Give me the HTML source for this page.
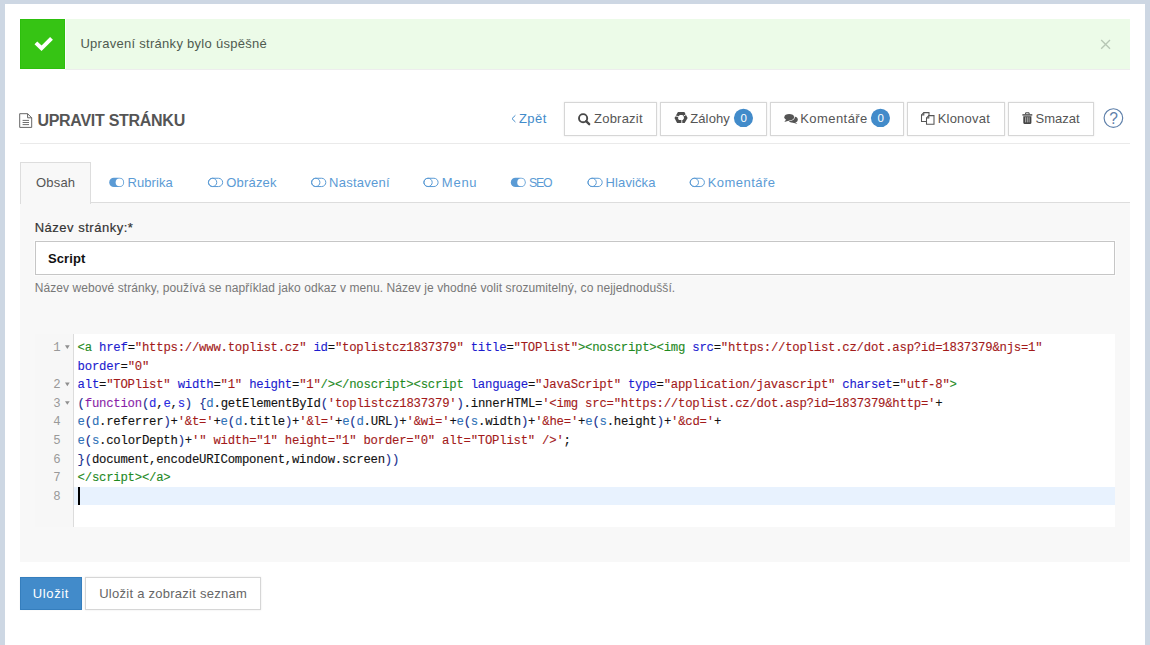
<!DOCTYPE html>
<html lang="cs">
<head>
<meta charset="utf-8">
<title>Upravit stránku</title>
<style>
html,body{margin:0;padding:0;}
body{width:1150px;height:645px;overflow:hidden;background:#cdd7e3;position:relative;font-family:"Liberation Sans",sans-serif;}
#page{position:absolute;left:5px;top:4px;width:1140px;height:641px;background:#fff;}
.abs{position:absolute;}
.t{position:absolute;white-space:nowrap;line-height:normal;}
#alertbox{left:65px;top:19px;width:1065px;height:50px;background:#ecfbe8;box-shadow:0 1px 0 #ededed, inset 1px 0 0 rgba(255,255,255,.75);}
#alertico{left:20px;top:19px;width:45px;height:50px;background:#36c414;box-sizing:border-box;border:1px solid #2dbf0d;}
#hr1{left:20px;top:143px;width:1110px;height:1px;background:#eaeaea;}
#tabline{left:20px;top:202px;width:1110px;height:1px;background:#ddd;}
#panel{left:20px;top:203px;width:1110px;height:359px;background:#f8f8f8;}
#tabact{left:20px;top:162px;width:69px;height:41px;background:#f8f8f8;border:1px solid #ddd;border-bottom:none;box-sizing:content-box;}
#input{left:35px;top:241px;width:1078px;height:32px;background:#fff;border:1px solid #c6c6c6;box-shadow:0 0 0 1px rgba(255,255,255,.55);}
#editor{left:35px;top:334px;width:1080px;height:193px;background:#fff;overflow:hidden;}
#gutter{left:0;top:0;width:38px;height:193px;background:#f7f7f7;border-right:1px solid #dcdcdc;}
#active{left:39px;top:153px;width:1041px;height:18px;background:#e8f2fe;}
#cursor{left:43px;top:153px;width:1.6px;height:18px;background:#000;}
#code{left:42.6px;top:0;}
.cl{-webkit-text-stroke:0.12px currentColor;position:absolute;left:0;white-space:pre;font-family:"Liberation Mono",monospace;font-size:12.3px;letter-spacing:-0.234px;line-height:18.64px;height:18.64px;color:#111;}
.gn{position:absolute;left:0;width:25.4px;text-align:right;font-family:"Liberation Mono",monospace;font-size:12.3px;letter-spacing:-0.234px;line-height:18.64px;color:#999;}
.fold{position:absolute;left:30px;width:0;height:0;border-left:2.4px solid transparent;border-right:2.4px solid transparent;border-top:3.8px solid #8f8f8f;}
.g{color:#1f8a1f}.a{color:#1c1ccf}.s{color:#a31a1a}.k{color:#8a1fa8}.p{color:#1a2f8f}.v{color:#2a2ae0}.i{color:#2f72b8}.n{color:#111}
#btn1{left:20px;top:577px;width:62px;height:33px;background:#428bca;box-sizing:border-box;border:1px solid #357ebd;box-shadow:0 0 2px rgba(0,0,0,.05);}
.btn{position:absolute;box-sizing:border-box;background:#fff;border:1px solid #d6d6d6;box-shadow:0 0 2px rgba(0,0,0,.09);}
svg{position:absolute;left:0;top:0;overflow:visible;}
.badge{position:absolute;font-size:11.5px;color:#fff;text-align:center;width:20px;line-height:20px;}
</style>
</head>
<body>
<div id="page"></div>
<div id="alertbox" class="abs"></div>
<div id="alertico" class="abs"></div>
<div id="hr1" class="abs"></div>
<div id="panel" class="abs"></div>
<div id="tabline" class="abs"></div>
<div id="tabact" class="abs"></div>
<div id="input" class="abs"></div>
<div id="btn1" class="abs"></div>
<div class="btn" style="left:564px;top:102px;width:93px;height:34px"></div>
<div class="btn" style="left:660px;top:102px;width:107px;height:34px"></div>
<div class="btn" style="left:770px;top:102px;width:134px;height:34px"></div>
<div class="btn" style="left:907px;top:102px;width:98px;height:34px"></div>
<div class="btn" style="left:1008px;top:102px;width:86px;height:34px"></div>
<div class="btn" style="left:85px;top:577px;width:176px;height:33px"></div>
<div id="editor" class="abs">
  <div id="gutter" class="abs">
<div class="gn" style="top:4.90px">1</div>
<div class="gn" style="top:42.18px">2</div>
<div class="gn" style="top:60.82px">3</div>
<div class="gn" style="top:79.46px">4</div>
<div class="gn" style="top:98.10px">5</div>
<div class="gn" style="top:116.74px">6</div>
<div class="gn" style="top:135.38px">7</div>
<div class="gn" style="top:154.02px">8</div>
  </div>
  <div id="active" class="abs"></div>
  <div id="code" class="abs">
<div class="cl" style="top:4.90px"><span class="g">&lt;a</span><span class="n"> </span><span class="a">href</span><span class="n">=</span><span class="s">&quot;https://www.toplist.cz&quot;</span><span class="n"> </span><span class="a">id</span><span class="n">=</span><span class="s">&quot;toplistcz1837379&quot;</span><span class="n"> </span><span class="a">title</span><span class="n">=</span><span class="s">&quot;TOPlist&quot;</span><span class="g">&gt;</span><span class="g">&lt;noscript&gt;</span><span class="g">&lt;img</span><span class="n"> </span><span class="a">src</span><span class="n">=</span><span class="s">&quot;https://toplist.cz/dot.asp?id=1837379&amp;njs=1&quot;</span></div>
<div class="cl" style="top:23.54px"><span class="a">border</span><span class="n">=</span><span class="s">&quot;0&quot;</span></div>
<div class="cl" style="top:42.18px"><span class="a">alt</span><span class="n">=</span><span class="s">&quot;TOPlist&quot;</span><span class="n"> </span><span class="a">width</span><span class="n">=</span><span class="s">&quot;1&quot;</span><span class="n"> </span><span class="a">height</span><span class="n">=</span><span class="s">&quot;1&quot;</span><span class="g">/&gt;</span><span class="g">&lt;/noscript&gt;</span><span class="g">&lt;script</span><span class="n"> </span><span class="a">language</span><span class="n">=</span><span class="s">&quot;JavaScript&quot;</span><span class="n"> </span><span class="a">type</span><span class="n">=</span><span class="s">&quot;application/javascript&quot;</span><span class="n"> </span><span class="a">charset</span><span class="n">=</span><span class="s">&quot;utf-8&quot;</span><span class="g">&gt;</span></div>
<div class="cl" style="top:60.82px"><span class="p">(</span><span class="k">function</span><span class="p">(</span><span class="v">d</span><span class="n">,</span><span class="v">e</span><span class="n">,</span><span class="v">s</span><span class="p">)</span><span class="n"> </span><span class="p">{</span><span class="i">d</span><span class="n">.getElementById</span><span class="p">(</span><span class="s">&#x27;toplistcz1837379&#x27;</span><span class="p">)</span><span class="n">.innerHTML=</span><span class="s">&#x27;&lt;img src</span><span class="s">=</span><span class="s">&quot;https://toplist.cz/dot.asp?id=1837379&amp;http=&#x27;</span><span class="n">+</span></div>
<div class="cl" style="top:79.46px"><span class="i">e</span><span class="p">(</span><span class="i">d</span><span class="n">.referrer</span><span class="p">)</span><span class="n">+</span><span class="s">&#x27;&amp;t=&#x27;</span><span class="n">+</span><span class="i">e</span><span class="p">(</span><span class="i">d</span><span class="n">.title</span><span class="p">)</span><span class="n">+</span><span class="s">&#x27;&amp;l=&#x27;</span><span class="n">+</span><span class="i">e</span><span class="p">(</span><span class="i">d</span><span class="n">.URL</span><span class="p">)</span><span class="n">+</span><span class="s">&#x27;&amp;wi=&#x27;</span><span class="n">+</span><span class="i">e</span><span class="p">(</span><span class="i">s</span><span class="n">.width</span><span class="p">)</span><span class="n">+</span><span class="s">&#x27;&amp;he=&#x27;</span><span class="n">+</span><span class="i">e</span><span class="p">(</span><span class="i">s</span><span class="n">.height</span><span class="p">)</span><span class="n">+</span><span class="s">&#x27;&amp;cd=&#x27;</span><span class="n">+</span></div>
<div class="cl" style="top:98.10px"><span class="i">e</span><span class="p">(</span><span class="i">s</span><span class="n">.colorDepth</span><span class="p">)</span><span class="n">+</span><span class="s">&#x27;&quot; width=&quot;1&quot; height=&quot;1&quot; border=&quot;0&quot; alt=&quot;TOPlist&quot; /&gt;&#x27;</span><span class="n">;</span></div>
<div class="cl" style="top:116.74px"><span class="p">}(</span><span class="n">document,encodeURIComponent,window.screen</span><span class="p">))</span></div>
<div class="cl" style="top:135.38px"><span class="g">&lt;/script&gt;</span><span class="g">&lt;/a&gt;</span></div>
<div class="cl" style="top:154.02px"></div>
  </div>
  <div id="cursor" class="abs"></div>
</div>
<svg width="1150" height="645" viewBox="0 0 1150 645">
  <!-- check -->
  <path d="M35.9 42.9 L41.5 48.3 L51.5 38.3" fill="none" stroke="#fff" stroke-width="4"/>
  <!-- close x -->
  <path d="M1101.2 40 L1110 48.8 M1110 40 L1101.2 48.8" fill="none" stroke="#b7c7b5" stroke-width="1.35"/>
  <!-- file-text-o -->
  <g fill="none" stroke="#5e5e5e" stroke-width="0.95">
    <path d="M19.7 113.7 H27.6 L31.7 117.8 V127.4 H19.7 Z"/>
    <path d="M27.6 113.7 V117.8 H31.7"/>
    <path d="M22.6 120.4 H29 M22.6 122.5 H29 M22.6 124.6 H29" stroke-width="0.9"/>
  </g>
  <!-- chevron -->
  <path d="M515.4 115.3 L512 118.65 L515.4 122" fill="none" stroke="#428bca" stroke-width="1"/>
  <!-- search -->
  <g fill="none" stroke="#484848">
    <circle cx="583.1" cy="118.2" r="4.1" stroke-width="1.9"/>
    <path d="M586.1 121.2 L589.2 124.2" stroke-width="2.3" stroke-linecap="round"/>
  </g>
  <!-- recycle -->
  <g fill="none">
    <path d="M676.2 118 L678.8 113.6 H683.5 L685.9 118 L683.8 121.6 H678 Z" stroke="#4c4c4c" stroke-width="3" stroke-linejoin="miter"/>
    <path d="M681.8 119.4 V124 M683.2 116.4 L687.4 113.6 M679.6 116.9 L673.8 115.5" stroke="#fff" stroke-width="0.9"/>
  </g>
  <!-- comments -->
  <g fill="#555">
    <ellipse cx="793.2" cy="119.6" rx="4.6" ry="3.2" fill="#555"/>
    <path d="M794.5 121.5 L797.4 123.9 L792.5 122.6 Z"/>
    <ellipse cx="789.2" cy="117.2" rx="5.6" ry="3.9" fill="#fff"/>
    <ellipse cx="789.2" cy="117.2" rx="4.9" ry="3.3"/>
    <path d="M786.5 119 L784.3 122 L789.5 120.4 Z"/>
  </g>
  <!-- files-o -->
  <g fill="#fff" stroke="#555" stroke-width="1.05">
    <path d="M923.8 112.6 H929 V121.4 H921.5 V115 Z"/>
    <path d="M923.8 112.6 V115 H921.5" fill="none"/>
    <path d="M928.8 115.6 H934 V124.2 H926.5 V118 Z"/>
    <path d="M928.8 115.6 V118 H926.5" fill="none"/>
  </g>
  <!-- trash -->
  <g fill="#444">
    <path d="M1022.4 114.2 H1032.3 V115.6 H1022.4 Z"/>
    <path d="M1025.6 114.2 V112.8 H1029.1 V114.2" fill="none" stroke="#444" stroke-width="1"/>
    <path d="M1023.3 116.2 H1031.4 V122.8 Q1031.4 123.9 1030.3 123.9 H1024.4 Q1023.3 123.9 1023.3 122.8 Z"/>
    <path d="M1025.6 117.2 V122.4 M1027.35 117.2 V122.4 M1029.1 117.2 V122.4" stroke="#c8c8c8" stroke-width=".8" fill="none"/>
  </g>
  <!-- fold arrows -->
  <g fill="#8f8f8f">
    <path d="M65 345.3 H69.7 L67.35 348.9 Z"/>
    <path d="M65 382.6 H69.7 L67.35 386.2 Z"/>
    <path d="M65 401.2 H69.7 L67.35 404.8 Z"/>
  </g>
  <!-- help -->
  <circle cx="1113.4" cy="118.1" r="9.3" fill="none" stroke="#5f80aa" stroke-width="1.15"/>
  <text x="1113.5" y="123.9" font-family="Liberation Sans, sans-serif" font-size="15.6" text-anchor="middle" fill="#5f80aa">?</text>
  <!-- badges -->
  <ellipse cx="743.45" cy="117.9" rx="9.55" ry="9.2" fill="#428bca"/>
  <ellipse cx="880.45" cy="117.9" rx="9.55" ry="9.2" fill="#428bca"/>
  <!-- toggles -->
  <g><rect x="109.20" y="177.75" width="14.9" height="9.3" rx="4.65" fill="#5b9bd5"/><circle cx="119.45" cy="182.4" r="3.8" fill="#fff"/></g>
  <g><rect x="510.80" y="177.75" width="14.9" height="9.3" rx="4.65" fill="#5b9bd5"/><circle cx="521.05" cy="182.4" r="3.8" fill="#fff"/></g>
  <g fill="none" stroke="#5b9bd5" stroke-width="1">
    <rect x="208.45" y="178.25" width="14.2" height="8.3" rx="4.15"/><circle cx="212.60" cy="182.4" r="4.15"/>
    <rect x="311.60" y="178.25" width="14.2" height="8.3" rx="4.15"/><circle cx="315.75" cy="182.4" r="4.15"/>
    <rect x="423.90" y="178.25" width="14.2" height="8.3" rx="4.15"/><circle cx="428.05" cy="182.4" r="4.15"/>
    <rect x="588.00" y="178.25" width="14.2" height="8.3" rx="4.15"/><circle cx="592.15" cy="182.4" r="4.15"/>
    <rect x="690.20" y="178.25" width="14.2" height="8.3" rx="4.15"/><circle cx="694.35" cy="182.4" r="4.15"/>
  </g>
</svg>
<span class="badge" style="left:733.6px;top:108px">0</span>
<span class="badge" style="left:870.6px;top:108px">0</span>
<span id="alert" class="t" style="left:80.45px;top:36.23px;font-size:13px;font-weight:400;color:#4f5a4f;letter-spacing:0.280px;">Upravení stránky bylo úspěšné</span>
<span id="title" class="t" style="left:37.44px;top:111.52px;font-size:16px;font-weight:700;color:#555;letter-spacing:-0.282px;">UPRAVIT STRÁNKU</span>
<span id="zpet" class="t" style="left:518.94px;top:111.23px;font-size:13px;font-weight:400;color:#428bca;letter-spacing:0.490px;">Zpět</span>
<span id="zobrazit" class="t" style="left:594.01px;top:111.23px;font-size:13px;font-weight:400;color:#555;letter-spacing:0.233px;">Zobrazit</span>
<span id="zalohy" class="t" style="left:690.18px;top:111.23px;font-size:13px;font-weight:400;color:#555;letter-spacing:0.136px;">Zálohy</span>
<span id="koment" class="t" style="left:800.17px;top:111.23px;font-size:13px;font-weight:400;color:#555;letter-spacing:0.450px;">Komentáře</span>
<span id="klon" class="t" style="left:937.68px;top:111.23px;font-size:13px;font-weight:400;color:#555;letter-spacing:0.216px;">Klonovat</span>
<span id="smazat" class="t" style="left:1035.45px;top:111.23px;font-size:13px;font-weight:400;color:#555;letter-spacing:0.027px;">Smazat</span>
<span id="t_obsah" class="t" style="left:36.02px;top:175.24px;font-size:13px;font-weight:400;color:#555;letter-spacing:0.185px;">Obsah</span>
<span id="t_rubrika" class="t" style="left:127.46px;top:175.24px;font-size:13px;font-weight:400;color:#5b9bd5;letter-spacing:0.086px;">Rubrika</span>
<span id="t_obrazek" class="t" style="left:226.22px;top:175.24px;font-size:13px;font-weight:400;color:#5b9bd5;letter-spacing:0.195px;">Obrázek</span>
<span id="t_nast" class="t" style="left:329.00px;top:175.24px;font-size:13px;font-weight:400;color:#5b9bd5;letter-spacing:0.269px;">Nastavení</span>
<span id="t_menu" class="t" style="left:441.82px;top:175.24px;font-size:13px;font-weight:400;color:#5b9bd5;letter-spacing:0.752px;">Menu</span>
<span id="t_seo" class="t" style="left:528.88px;top:175.87px;font-size:12.3px;font-weight:400;color:#5b9bd5;letter-spacing:-1.088px;">SEO</span>
<span id="t_hlav" class="t" style="left:605.62px;top:175.24px;font-size:13px;font-weight:400;color:#5b9bd5;letter-spacing:0.101px;">Hlavička</span>
<span id="t_kom" class="t" style="left:707.68px;top:175.24px;font-size:13px;font-weight:400;color:#5b9bd5;letter-spacing:0.474px;">Komentáře</span>
<span id="label" class="t" style="left:34.67px;top:220.24px;font-size:13px;font-weight:400;color:#333;letter-spacing:0.516px;-webkit-text-stroke:0.18px #333;">Název stránky:*</span>
<span id="script" class="t" style="left:48.01px;top:251.24px;font-size:13px;font-weight:700;color:#111;letter-spacing:0.090px;">Script</span>
<span id="help" class="t" style="left:34.74px;top:281.14px;font-size:12px;font-weight:400;color:#777;letter-spacing:0.073px;">Název webové stránky, používá se například jako odkaz v menu. Název je vhodné volit srozumitelný, co nejjednodušší.</span>
<span id="ulozit" class="t" style="left:32.84px;top:586.24px;font-size:13px;font-weight:400;color:#fff;letter-spacing:0.625px;">Uložit</span>
<span id="ulozit2" class="t" style="left:99.19px;top:586.24px;font-size:13px;font-weight:400;color:#666;letter-spacing:0.261px;">Uložit a zobrazit seznam</span>
</body>
</html>
